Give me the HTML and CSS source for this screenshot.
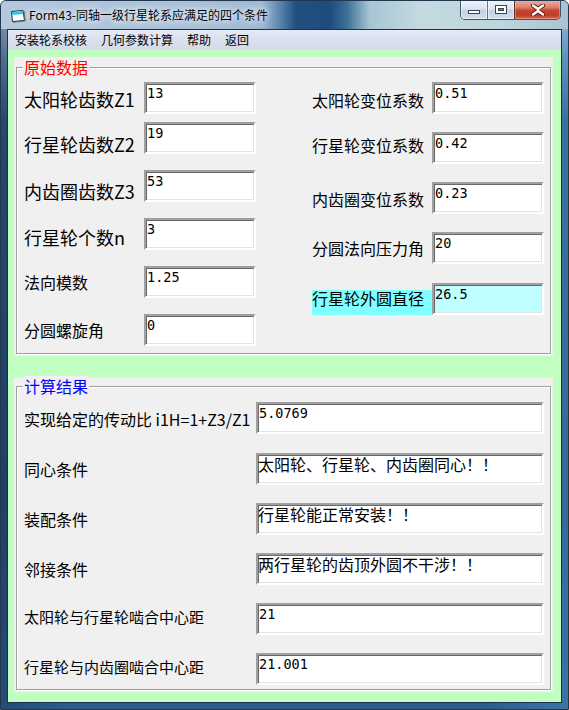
FILE: index.html
```html
<!DOCTYPE html>
<html lang="zh-CN">
<head>
<meta charset="utf-8">
<title>Form43</title>
<link rel="stylesheet" href="styles.css">
</head>
<body>
<div class="window">
  <div class="titlebar">
    <svg class="appicon" width="16" height="16" viewBox="0 0 16 16">
      <path d="M1.5 3.5 L13 2.5 L14.5 12.5 L2.5 13.5 Z" fill="#ffffff" stroke="#26303c" stroke-width="1"/>
      <path d="M2 4 L12.8 3 L13.2 6 L2.3 7 Z" fill="#35c4ea"/>
      <path d="M14 3 L15.2 12.8 L3 14.2" fill="none" stroke="#55606c" stroke-width="1"/>
    </svg>
    <span class="title">Form43-同轴一级行星轮系应满足的四个条件</span>
    <div class="caption">
      <div class="cbtn min">
        <svg width="14" height="6" viewBox="0 0 14 6"><rect x="1.5" y="1.5" width="11" height="3" fill="#fff" stroke="#3a4656"/></svg>
      </div>
      <div class="cbtn max">
        <svg width="14" height="11" viewBox="0 0 14 11"><rect x="1.5" y="1.5" width="11" height="8" fill="#fff" stroke="#3a4656"/><rect x="4.5" y="4.5" width="5" height="2" fill="#6d7d90" stroke="#3a4656"/></svg>
      </div>
      <div class="cbtn close">
        <svg width="16" height="12" viewBox="0 0 16 12"><path d="M3 1.5 L8 5 L13 1.5 M3 10.5 L8 7 L13 10.5" fill="none" stroke="#5a1e14" stroke-width="4.2" stroke-linecap="round"/><path d="M3 1.5 L8 5 L13 1.5 M3 10.5 L8 7 L13 10.5 M8 5 L8 7" fill="none" stroke="#ffffff" stroke-width="2.4" stroke-linecap="round"/></svg>
      </div>
    </div>
  </div>
  <div class="body">
    <div class="client">
      <div class="menubar">
        <span class="mi">安装轮系校核</span>
        <span class="mi">几何参数计算</span>
        <span class="mi">帮助</span>
        <span class="mi">返回</span>
      </div>
      <div class="content">
        <div class="group g1">
          <div class="frame f1">
            <span class="legend red">原始数据</span>
            <div class="cols">
              <div class="col col-a">
                <div class="row"><span class="lbl big m1">太阳轮齿数Z1</span><div class="tb">13</div></div>
                <div class="row"><span class="lbl big m6">行星轮齿数Z2</span><div class="tb">19</div></div>
                <div class="row"><span class="lbl big m5">内齿圈齿数Z3</span><div class="tb">53</div></div>
                <div class="row"><span class="lbl big m3">行星轮个数n</span><div class="tb">3</div></div>
                <div class="row"><span class="lbl">法向模数</span><div class="tb">1.25</div></div>
                <div class="row"><span class="lbl">分圆螺旋角</span><div class="tb">0</div></div>
              </div>
              <div class="col col-b">
                <div class="row"><span class="lbl m2">太阳轮变位系数</span><div class="tb">0.51</div></div>
                <div class="row"><span class="lbl mn3">行星轮变位系数</span><div class="tb">0.42</div></div>
                <div class="row"><span class="lbl m1">内齿圈变位系数</span><div class="tb">0.23</div></div>
                <div class="row"><span class="lbl">分圆法向压力角</span><div class="tb">20</div></div>
                <div class="row end"><span class="lbl cyan">行星轮外圆直径</span><div class="tb cy">26.5</div></div>
              </div>
            </div>
          </div>
        </div>
        <div class="group g2">
          <div class="frame f2">
            <span class="legend blue">计算结果</span>
            <div class="list">
              <div class="row"><span class="lbl2 m1">实现给定的传动比 i1H=1+Z3/Z1</span><div class="tb wide">5.0769</div></div>
              <div class="row"><span class="lbl2">同心条件</span><div class="tb wide cn">太阳轮、行星轮、内齿圈同心！！</div></div>
              <div class="row"><span class="lbl2">装配条件</span><div class="tb wide cn">行星轮能正常安装！！</div></div>
              <div class="row"><span class="lbl2">邻接条件</span><div class="tb wide cn">两行星轮的齿顶外圆不干涉！！</div></div>
              <div class="row"><span class="lbl2 sm mn2">太阳轮与行星轮啮合中心距</span><div class="tb wide">21</div></div>
              <div class="row"><span class="lbl2 sm mn2">行星轮与内齿圈啮合中心距</span><div class="tb wide">21.001</div></div>
            </div>
          </div>
        </div>
      </div>
    </div>
  </div>
</div>
</body>
</html>
```

FILE: styles.css
```css
html, body {
  margin: 0;
  padding: 0;
}
body {
  width: 569px;
  height: 710px;
  overflow: hidden;
  background: #ffffff;
  font-family: "Noto Sans CJK SC", "Noto Sans", sans-serif;
  color: #000;
}
.window {
  width: 569px;
  height: 710px;
  box-sizing: border-box;
  border: 1px solid #22364c;
  border-radius: 6px 6px 0 0;
  display: flex;
  flex-direction: column;
  background:
    linear-gradient(to right, rgba(10, 25, 45, 0.25) 0, rgba(0, 0, 0, 0) 12%, rgba(0, 0, 0, 0) 85%, rgba(90, 160, 215, 0.35) 100%),
    linear-gradient(to bottom, #a9c1d8 0, #90adc9 30px, #5e86ac 60px, #2d577f 120px, #264e77 70%, #2c5d8c 100%);
  overflow: hidden;
}
.titlebar {
  height: 28px;
  flex: none;
  display: flex;
  align-items: center;
  padding-left: 9px;
  background: linear-gradient(to right, #b3c9de 0, #a9c1d9 30%, #9fb9d3 46%, #5f88b0 49%, #214f80 52%, #1d4c7d 58%, #3d6f98 61%, #a7c5d3 65%, #c4dae0 74%, #bdd5dc 88%, #a9c3d2 100%);
}
.appicon {
  flex: none;
  margin-right: 3px;
  margin-top: 1px;
}
.title {
  font-size: 12px;
  line-height: 16px;
  white-space: nowrap;
  color: #000;
  text-shadow: 0 0 6px #ffffff, 0 0 10px rgba(255, 255, 255, 0.9);
}
.caption {
  margin-left: auto;
  margin-right: 7px;
  margin-top: -1px;
  align-self: flex-start;
  display: flex;
  height: 20px;
  box-sizing: border-box;
  border: 1px solid #3f536b;
  border-top: none;
  border-radius: 0 0 5px 5px;
  overflow: hidden;
}
.cbtn {
  height: 19px;
  display: flex;
  align-items: center;
  justify-content: center;
  background: linear-gradient(to bottom, #eef3f8 0, #dce6f0 45%, #c3d3e3 55%, #cfdeeb 100%);
  box-shadow: inset 0 0 0 1px rgba(255, 255, 255, 0.55);
}
.cbtn.min {
  width: 26px;
  align-items: flex-end;
  padding-bottom: 4px;
  box-sizing: border-box;
}
.cbtn.max {
  width: 27px;
  box-sizing: border-box;
  border-left: 1px solid #62768e;
}
.cbtn.close {
  width: 46px;
  box-sizing: border-box;
  border-left: 1px solid #5b2a22;
  background: linear-gradient(to bottom, #eab3a3 0, #dc7d68 40%, #c5452e 55%, #c03d26 80%, #d9694c 100%);
  box-shadow: inset 0 0 0 1px rgba(255, 200, 180, 0.45);
}
.body {
  flex: 1;
  display: flex;
  padding: 0 6px 6px 6px;
}
.client {
  flex: 1;
  display: flex;
  flex-direction: column;
  border: 1px solid #1c3047;
}
.menubar {
  height: 20px;
  flex: none;
  display: flex;
  align-items: center;
  background: linear-gradient(to bottom, #e6eaf4 0, #dbe0ee 50%, #d4dae9 100%);
  font-size: 12px;
  line-height: 20px;
}
.mi {
  padding: 0 7px;
  white-space: nowrap;
}
.content {
  flex: 1;
  background: #c0ffc0;
  padding: 7px 8px 0 6px;
}
.group {
  background: #f0f0f0;
  padding: 10px 2px 2px 2px;
}
.g2 {
  margin-top: 22px;
  padding-top: 8px;
}
.frame {
  position: relative;
  box-sizing: border-box;
  border: 1px solid #a0a0a0;
  box-shadow: inset 1px 1px 0 #ffffff, 1px 1px 0 #ffffff;
}
.f1 { height: 287px; }
.f2 { height: 304px; }
.legend {
  position: absolute;
  top: -11px;
  left: 6px;
  padding: 0 1px;
  background: #f0f0f0;
  font-size: 16px;
  line-height: 20px;
  white-space: nowrap;
}
.red { color: #ff0000; }
.blue { color: #0000ff; }
.cols {
  display: grid;
  grid-template-columns: 232px 232px;
  column-gap: 56px;
  padding: 14px 0 0 7px;
}
.col { display: grid; }
.col-a { grid-template-rows: 40px 48px 48px 48px 48px 32px; }
.col-b { grid-template-rows: 50px 50px 50px 51px 32px; }
.row {
  display: flex;
  align-items: flex-start;
}
.row.end { align-items: flex-end; height: 32px; }
.lbl {
  width: 120px;
  flex: none;
  font-size: 16px;
  line-height: 32px;
  white-space: nowrap;
}
.lbl.big { font-size: 18px; }
.lbl.cyan {
  background: #80ffff;
  height: 25px;
  line-height: 16px;
}
.m1 { margin-top: 1px; }
.m2 { margin-top: 2px; }
.m3 { margin-top: 3px; }
.m5 { margin-top: 5px; }
.m6 { margin-top: 6px; }
.mn2 { margin-top: -2px; }
.mn3 { margin-top: -3px; }
.tb {
  width: 112px;
  height: 32px;
  flex: none;
  box-sizing: border-box;
  border: 2px solid;
  border-color: #a0a0a0 #ffffff #ffffff #a0a0a0;
  box-shadow: inset 1px 1px 0 #696969, inset -1px -1px 0 #e3e3e3;
  background: #ffffff;
  font-family: "DejaVu Sans Mono", "Liberation Mono", monospace;
  font-size: 13.5px;
  line-height: 16px;
  padding: 1px 0 0 1px;
  white-space: nowrap;
  overflow: hidden;
}
.tb.cy { background: #c0ffff; }
.tb.wide { width: 288px; }
.tb.cn {
  font-family: "Noto Sans CJK SC", sans-serif;
  font-size: 16px;
  line-height: 16px;
  padding: 1px 0 0 0;
}
.list {
  display: flex;
  flex-direction: column;
  gap: 18px;
  padding: 15px 0 0 7px;
}
.lbl2 {
  width: 232px;
  flex: none;
  font-size: 16px;
  line-height: 32px;
  white-space: nowrap;
}
.lbl2.sm { font-size: 15px; }
```
